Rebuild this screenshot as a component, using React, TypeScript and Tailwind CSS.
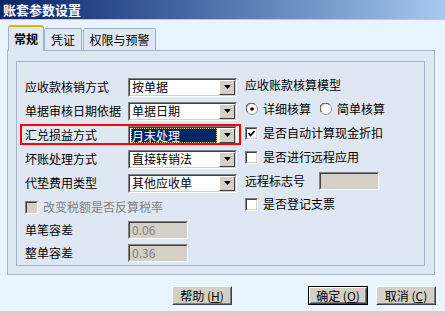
import React from 'react';

const sunken =
  'border border-t-[#808080] border-l-[#808080] border-b-white border-r-white';
const sunkenInner =
  'border border-t-[#404040] border-l-[#404040] border-b-[#d4d0c8] border-r-[#d4d0c8]';

function DropButton() {
  return (
    <div className="w-[16px] h-full bg-[#d4d0c8] border border-t-white border-l-white border-b-[#404040] border-r-[#404040] flex items-center justify-center">
      <svg width="7" height="4" viewBox="0 0 7 4">
        <polygon points="0,0 7,0 3.5,4" fill="#000" />
      </svg>
    </div>
  );
}

function Combo({ value, active }: { value: string; active?: boolean }) {
  return (
    <div className={`w-[109px] h-[19px] flex ${sunken}`}>
      <div className={`flex-1 flex bg-white ${sunkenInner}`}>
        <div className="flex-1 flex items-center pl-[1px] pr-[2px]">
          {active ? (
            <div className="w-full h-[15px] flex items-center bg-[#0a246a] text-white border border-dotted border-[#e8d890] leading-[13px]">
              {value}
            </div>
          ) : (
            <span className="pl-[1px] leading-none">{value}</span>
          )}
        </div>
        <DropButton />
      </div>
    </div>
  );
}

function CheckBox({ checked, disabled }: { checked?: boolean; disabled?: boolean }) {
  return (
    <div className={`w-[13px] h-[13px] shrink-0 flex ${sunken}`}>
      <div
        className={`flex-1 flex items-center justify-center ${sunkenInner} ${
          disabled ? 'bg-[#d4d0c8]' : 'bg-white'
        }`}
      >
        {checked && (
          <svg width="7" height="7" viewBox="0 0 7 7">
            <polyline points="0.5,3 2.5,5.5 6.5,1" fill="none" stroke="#000" strokeWidth="1.6" />
          </svg>
        )}
      </div>
    </div>
  );
}

function Radio({ checked }: { checked?: boolean }) {
  return (
    <svg width="12" height="12" viewBox="0 0 12 12" className="shrink-0">
      <circle cx="6" cy="6" r="5.5" fill="#fff" stroke="#9a9a9a" />
      <path d="M1.5 9 A5 5 0 0 1 9 1.5" fill="none" stroke="#404040" />
      {checked && <circle cx="6" cy="6" r="1.8" fill="#000" />}
    </svg>
  );
}

function GrayInput({ value }: { value?: string }) {
  return (
    <div className={`w-[60px] h-[18px] flex ${sunken}`}>
      <div className={`flex-1 flex items-center pl-[2px] bg-[#d4d0c8] text-[#808080] ${sunkenInner}`}>
        {value}
      </div>
    </div>
  );
}

function Btn({ children, primary }: { children: React.ReactNode; primary?: boolean }) {
  return (
    <div className={`w-[60px] h-[19px] flex ${primary ? 'border border-black' : ''}`}>
      <div className="flex-1 flex border border-t-white border-l-white border-b-[#404040] border-r-[#404040]">
        <div className="flex-1 flex items-center justify-center bg-[#d4d0c8] border border-t-[#d4d0c8] border-l-[#d4d0c8] border-b-[#808080] border-r-[#808080] leading-none">
          {children}
        </div>
      </div>
    </div>
  );
}

const leftRows = [
  { label: '应收款核销方式', value: '按单据' },
  { label: '单据审核日期依据', value: '单据日期' },
  { label: '汇兑损益方式', value: '月末处理', active: true },
  { label: '坏账处理方式', value: '直接转销法' },
  { label: '代垫费用类型', value: '其他应收单' },
];

export default function App() {
  return (
    <div
      className="w-[445px] h-[314px] flex flex-col bg-[#eaf4fe] text-[12px] text-black"
      style={{ fontFamily: '"Noto Sans CJK SC", "Liberation Sans", sans-serif' }}
    >
      <div className="h-[20px] shrink-0 flex items-center pl-[3px] bg-gradient-to-r from-[#0a246a] to-[#a6caf0] text-white font-bold text-[13px] border-b border-[#c8c8c8]">
        账套参数设置
      </div>

      <div className="flex-1 flex flex-col pl-[7px] pr-[10px] pt-[5px]">
        {/* tabs */}
        <div className="h-[25px] flex items-end pl-[1px] gap-[1px] relative z-10">
          <div className="w-[36px] h-[26px] mb-[-1px] flex items-center justify-center font-bold bg-[#dfe8f2] border-x border-[#9fb3c8] border-t-2 border-t-[#e0b400] rounded-t-[3px]">
            常规
          </div>
          <div className="w-[38px] h-[22px] flex items-center justify-center bg-[#dfe8f2] border-x border-t border-[#9fb3c8] rounded-t-[2px] -ml-[1px]">
            凭证
          </div>
          <div className="w-[73px] h-[22px] flex items-center justify-center bg-[#dfe8f2] border-x border-t border-[#9fb3c8] rounded-t-[2px]">
            权限与预警
          </div>
        </div>

        {/* panel */}
        <div className="h-[225px] border border-[#a3b6cd] bg-[#dfe8f2] pl-[8px] pr-[9px] pt-[10px]">
          <div className="h-[205px] border border-[#a3b6cd] flex">
            <div className="w-[228px] pl-[8px] pt-[13px] flex flex-col">
              {leftRows.map((r) => (
                <div key={r.label} className="h-[24px] flex items-center relative">
                  <div className="w-[103px]">{r.label}</div>
                  <Combo value={r.value} active={r.active} />
                  {r.active && (
                    <div className="absolute left-[-5px] top-[1px] w-[221px] h-[21px] border-2 border-[#ff0000]" />
                  )}
                </div>
              ))}
              <div className="h-[24px] flex items-center gap-[5px]">
                <CheckBox disabled />
                <span className="text-[#808080]">改变税额是否反算税率</span>
              </div>
              <div className="h-[21px] flex items-center">
                <div className="w-[103px]">单笔容差</div>
                <GrayInput value="0.06" />
              </div>
              <div className="h-[25px] flex items-center">
                <div className="w-[103px]">整单容差</div>
                <GrayInput value="0.36" />
              </div>
            </div>

            <div className="flex-1 pt-[11px] flex flex-col">
              <div className="h-[24px] flex items-center">应收账款核算模型</div>
              <div className="h-[24px] flex items-center pl-[1px]">
                <Radio checked />
                <span className="ml-[5px]">详细核算</span>
                <span className="ml-[9px]">
                  <Radio />
                </span>
                <span className="ml-[5px]">简单核算</span>
              </div>
              <div className="h-[24px] flex items-center gap-[5px]">
                <CheckBox checked />
                <span>是否自动计算现金折扣</span>
              </div>
              <div className="h-[24px] flex items-center gap-[5px]">
                <CheckBox />
                <span>是否进行远程应用</span>
              </div>
              <div className="h-[23px] flex items-center">
                <div className="w-[74px]">远程标志号</div>
                <GrayInput />
              </div>
              <div className="h-[24px] flex items-center gap-[5px]">
                <CheckBox />
                <span>是否登记支票</span>
              </div>
            </div>
          </div>
        </div>

        {/* buttons */}
        <div className="flex mt-[11px] mr-[-1px]">
          <div className="ml-[165px]">
            <Btn>
              帮助&nbsp;(<u>H</u>)
            </Btn>
          </div>
          <div className="ml-auto flex gap-[8px]">
            <Btn primary>
              确定&nbsp;(<u>O</u>)
            </Btn>
            <Btn>
              取消&nbsp;(<u>C</u>)
            </Btn>
          </div>
        </div>
      </div>
      <div className="h-[3px] shrink-0 bg-[#d4d0c8]" />
    </div>
  );
}
